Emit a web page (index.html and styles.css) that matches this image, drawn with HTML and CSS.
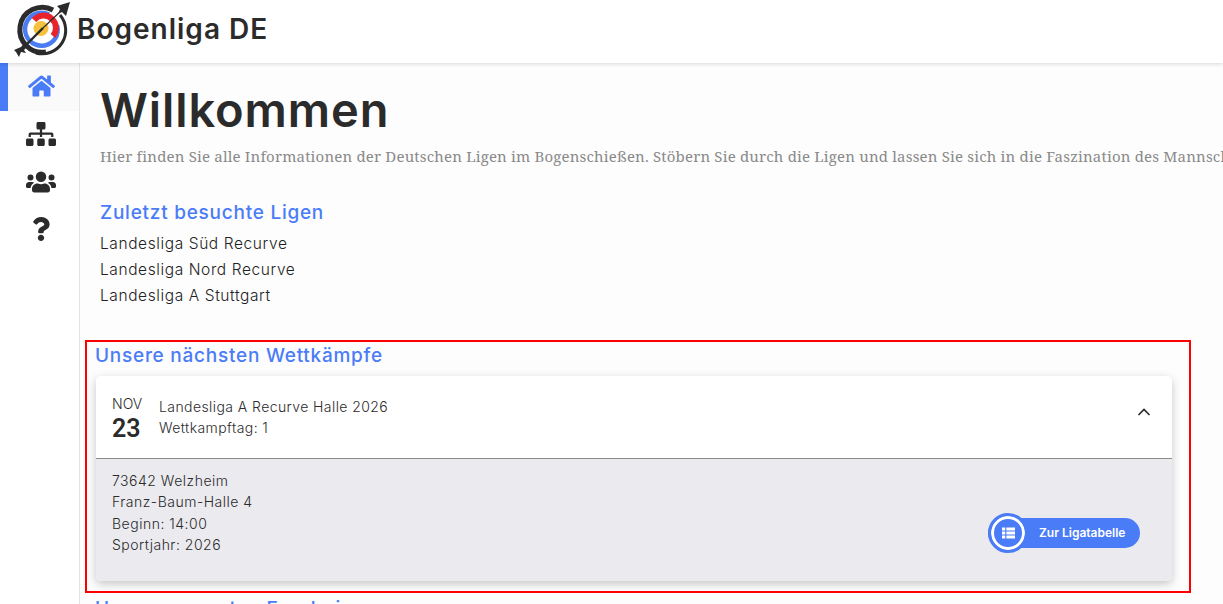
FILE: index.html
```html
<!DOCTYPE html>
<html lang="de">
<head>
<meta charset="utf-8">
<title>Bogenliga DE</title>
<link rel="stylesheet" href="styles.css">
</head>
<body>
<header class="topbar">
  <svg class="logo" viewBox="0 0 60 60" width="60" height="60" aria-hidden="true">
    <path d="M41 10A22.500 22.500 0 1 0 34 52" fill="none" stroke="#2b2b2b" stroke-width="5"/>
    <path d="M48 15A23.500 23.500 0 0 1 24 53" fill="none" stroke="#2b2b2b" stroke-width="3"/>
    <path d="M37 14.500A16.500 16.500 0 1 0 45 35" fill="none" stroke="#4a7cf3" stroke-width="4.500"/>
    <path d="M46 25A16.500 16.500 0 0 1 31 46" fill="none" stroke="#4a7cf3" stroke-width="2.500"/>
    <path d="M22 20A12 12 0 0 1 41 36" fill="none" stroke="#e8232a" stroke-width="6"/>
    <circle cx="29" cy="28.500" r="7.500" fill="#f6c13c"/>
    <path d="M31 28 12 47" stroke="#2b2b2b" stroke-width="2.400"/>
    <path d="M31 28 50 10" stroke="#2b2b2b" stroke-width="1.200"/>
    <path d="M2 50 9 47 13 42 16 46 12 50 14 53 9 52 7 57 4 52Z" fill="#2b2b2b"/>
    <path d="M58 2 54 16 50 12 46 14 48 9 45 6Z" fill="#2b2b2b"/>
  </svg>
  <span class="brand">Bogenliga DE</span>
</header>
<div class="body-row">
  <nav class="sidebar">
    <a class="nav-item active">
      <svg viewBox="0 0 576 512" width="27" height="24"><path fill="currentColor" d="M280.4 148.3 96 300.1V464a16 16 0 0 0 16 16l112.100-.3a16 16 0 0 0 15.900-16V368a16 16 0 0 1 16-16h64a16 16 0 0 1 16 16v95.600a16 16 0 0 0 16 16.100L464 480a16 16 0 0 0 16-16V300L295.700 148.300a12.200 12.200 0 0 0-15.300 0zM571.600 251.500 488 182.600V44.100a12 12 0 0 0-12-12h-56a12 12 0 0 0-12 12v72.600L318.500 43a48 48 0 0 0-61 0L4.300 251.500a12 12 0 0 0-1.600 16.900l25.500 31A12 12 0 0 0 45.200 301l235.200-193.700a12.200 12.200 0 0 1 15.300 0L530.900 301a12 12 0 0 0 16.900-1.600l25.500-31a12 12 0 0 0-1.700-16.900z"/></svg>
    </a>
    <a class="nav-item">
      <svg viewBox="0 0 640 512" width="30" height="24"><path fill="currentColor" d="M128 352H32c-17.700 0-32 14.300-32 32v96c0 17.700 14.300 32 32 32h96c17.700 0 32-14.300 32-32v-96c0-17.700-14.300-32-32-32zm-24-80h192v48h48v-48h192v48h48v-57.600c0-21.200-17.200-38.400-38.400-38.400H344v-64h40c17.700 0 32-14.300 32-32V32c0-17.700-14.300-32-32-32H256c-17.700 0-32 14.300-32 32v96c0 17.700 14.300 32 32 32h40v64H94.400C73.200 224 56 241.200 56 262.400V320h48v-48zm264 80h-96c-17.700 0-32 14.300-32 32v96c0 17.700 14.300 32 32 32h96c17.700 0 32-14.300 32-32v-96c0-17.700-14.300-32-32-32zm240 0h-96c-17.700 0-32 14.300-32 32v96c0 17.700 14.300 32 32 32h96c17.700 0 32-14.300 32-32v-96c0-17.700-14.300-32-32-32z"/></svg>
    </a>
    <a class="nav-item">
      <svg viewBox="0 0 640 512" width="30" height="24"><path fill="currentColor" d="M96 224a64 64 0 1 0 0-128 64 64 0 0 0 0 128zm448 0a64 64 0 1 0 0-128 64 64 0 0 0 0 128zm32 32h-64c-17.600 0-33.500 7.100-45.100 18.600 40.300 22.100 68.900 62 75.100 109.400h66c17.700 0 32-14.300 32-32v-32c0-35.300-28.700-64-64-64zm-256 0a112 112 0 1 0 0-224 112 112 0 0 0 0 224zm76.800 32h-8.300c-20.800 10-43.900 16-68.500 16s-47.600-6-68.500-16h-8.300C179.600 288 128 339.600 128 403.200V432c0 26.500 21.500 48 48 48h288c26.500 0 48-21.500 48-48v-28.800c0-63.600-51.600-115.200-115.200-115.200zm-223.700-13.400C161.500 263.100 145.600 256 128 256H64c-35.300 0-64 28.700-64 64v32c0 17.700 14.300 32 32 32h65.900c6.300-47.400 34.900-87.300 75.200-109.400z"/></svg>
    </a>
    <a class="nav-item">
      <svg viewBox="0 0 384 512" width="18" height="24"><path fill="currentColor" d="M202 0C122 0 70 33 29 91c-7 11-5 25 5 33l43 33c10 8 25 6 33-4 25-31 44-49 83-49 31 0 69 20 69 50 0 23-19 34-49 51-36 20-83 45-83 107v10c0 13 11 24 24 24h72c13 0 24-11 24-24v-6c0-43 126-45 126-162C376 66 285 0 202 0zm-10 376c-38 0-69 31-69 68s31 68 69 68 68-31 68-68-30-68-68-68z"/></svg>
    </a>
  </nav>
  <main class="content">
    <h1 class="title">Willkommen</h1>
    <p class="lead">Hier finden Sie alle Informationen der Deutschen Ligen im Bogenschießen. Stöbern Sie durch die Ligen und lassen Sie sich in die Faszination des Mannschaftsbogensports mitreißen.</p>
    <section class="recent">
      <h2 class="heading">Zuletzt besuchte Ligen</h2>
      <ul class="league-list">
        <li>Landesliga Süd Recurve</li>
        <li>Landesliga Nord Recurve</li>
        <li>Landesliga A Stuttgart</li>
      </ul>
    </section>
    <section class="events">
      <h2 class="heading">Unsere nächsten Wettkämpfe</h2>
      <article class="card">
        <div class="card-head">
          <div class="date">
            <span class="month">NOV</span>
            <span class="day">23</span>
          </div>
          <div class="event-title">
            <div>Landesliga A Recurve Halle 2026</div>
            <div>Wettkampftag: 1</div>
          </div>
          <svg class="chevron" viewBox="0 0 14 9" width="14" height="9"><path d="M1.500 8 7 2.500 12.500 8" fill="none" stroke="#2b2b2b" stroke-width="1.700"/></svg>
        </div>
        <div class="card-body">
          <div class="details">
            <div>73642 Welzheim</div>
            <div>Franz-Baum-Halle 4</div>
            <div>Beginn: 14:00</div>
            <div>Sportjahr: 2026</div>
          </div>
          <a class="pill">
            <span class="pill-icon">
              <svg viewBox="0 0 14 12" width="13" height="12"><path fill="#fff" d="M0 0h3.500v3.200H0zM0 4.400h3.500v3.200H0zM0 8.800h3.500V12H0zM4.700 0H14v3.200H4.700zM4.700 4.400H14v3.200H4.700zM4.700 8.800H14V12H4.700z"/></svg>
            </span>
            <span class="pill-text">Zur Ligatabelle</span>
          </a>
        </div>
      </article>
    </section>
    <h2 class="heading next">Unsere neuesten Ergebnisse</h2>
  </main>
</div>
</body>
</html>
```
FILE: styles.css
```css
* { box-sizing: border-box; }
html, body { height: 100%; }
body {
  margin: 0;
  height: 604px;
  overflow: hidden;
  font-family: "Inter", "Liberation Sans", sans-serif;
  color: #2b2b2b;
  background: #fdfdfd;
  display: flex;
  flex-direction: column;
}
.topbar {
  height: 63px;
  flex: none;
  display: flex;
  align-items: center;
  padding-left: 12px;
  background: #fff;
  box-shadow: 0 1px 4px rgba(0,0,0,.15);
  position: relative;
  z-index: 2;
}
.logo { margin-top: -3px; flex: none; }
.brand { margin-left: 5px; font-size: 28px; font-weight: 600; letter-spacing: 1px; margin-top: -5px; }
.body-row { flex: 1; display: flex; min-height: 0; }
.sidebar {
  width: 80px;
  flex: none;
  background: #fff;
  border-right: 1px solid #e4e4e4;
  display: flex;
  flex-direction: column;
}
.nav-item {
  height: 47.5px;
  display: flex;
  align-items: center;
  justify-content: center;
  color: #2b2b2b;
  padding-left: 3px;
}
.nav-item.active {
  color: #4a7cf7;
  background: #fafafa;
  border-left: 8px solid #4a7cf7;
  padding: 0 5px 2px 0;
}
.content {
  flex: 1;
  min-width: 0;
  padding: 17px 0 0 20px;
  white-space: nowrap;
  overflow: hidden;
  background: #fdfdfd;
}
.title { margin: 0; font-size: 47px; line-height: 60px; font-weight: 600; letter-spacing: .9px; }
.lead {
  margin: 6px 0 0;
  font-family: "Noto Serif", "DejaVu Serif", "Liberation Serif", serif;
  font-size: 15px;
  line-height: 20px;
  letter-spacing: .18px;
  color: #8a8a8a;
}
.recent { margin-top: 34px; }
.heading { margin: 0; font-size: 19px; line-height: 26px; font-weight: 500; letter-spacing: .75px; color: #4a7cf7; }
.league-list { list-style: none; margin: 5px 0 0; padding: 0; font-size: 15.500px; line-height: 26px; font-weight: 300; letter-spacing: .6px; color: #222; }
.events {
  width: 1106px;
  height: 253px;
  margin: 31px 0 0 -15px;
  padding: 3px 19px 0 11px;
  outline: 2px solid #f00;
  outline-offset: -2px;
}
.events .heading { margin-left: -1px; }
.card {
  margin-top: 7px;
  border-radius: 5px;
  box-shadow: 0 3px 10px rgba(0,0,0,.22);
  overflow: hidden;
}
.card-head {
  height: 83px;
  display: flex;
  align-items: center;
  padding: 0 21px 0 16px;
  background: #fff;
  border-bottom: 1px solid #8a8a8a;
}
.date { width: 47px; display: flex; flex-direction: column; padding-top: 3px; }
.month { font-size: 14px; line-height: 18px; font-weight: 300; }
.day { font-family: "Roboto", "Liberation Sans", sans-serif; font-size: 25px; line-height: 29px; font-weight: 600; margin-top: 1px; }
.event-title { flex: 1; font-size: 14px; line-height: 21px; font-weight: 300; letter-spacing: .42px; }
.chevron { margin-bottom: 12px; flex: none; }
.card-body {
  height: 122px;
  background: #eaeaef;
  display: flex;
  align-items: flex-start;
  justify-content: space-between;
  padding: 11px 32px 0 16px;
  font-size: 14px;
  line-height: 21.300px;
  font-weight: 300;
  letter-spacing: .5px;
}
.pill {
  margin-top: 48px;
  width: 152px;
  height: 30px;
  border-radius: 15px;
  background: #4a7cf7;
  color: #fff;
  display: flex;
  align-items: center;
}
.pill-icon {
  width: 40px;
  height: 40px;
  margin: -5px 0;
  flex: none;
  border-radius: 50%;
  background: #4a7cf7;
  border: 3px solid #4a7cf7;
  box-shadow: inset 0 0 0 3px #fff;
  display: flex;
  align-items: center;
  justify-content: center;
}
.pill-text { margin-left: 11px; font-size: 12px; font-weight: 600; letter-spacing: 0; }
.next { margin: 3px 0 0 -5px; }
```
